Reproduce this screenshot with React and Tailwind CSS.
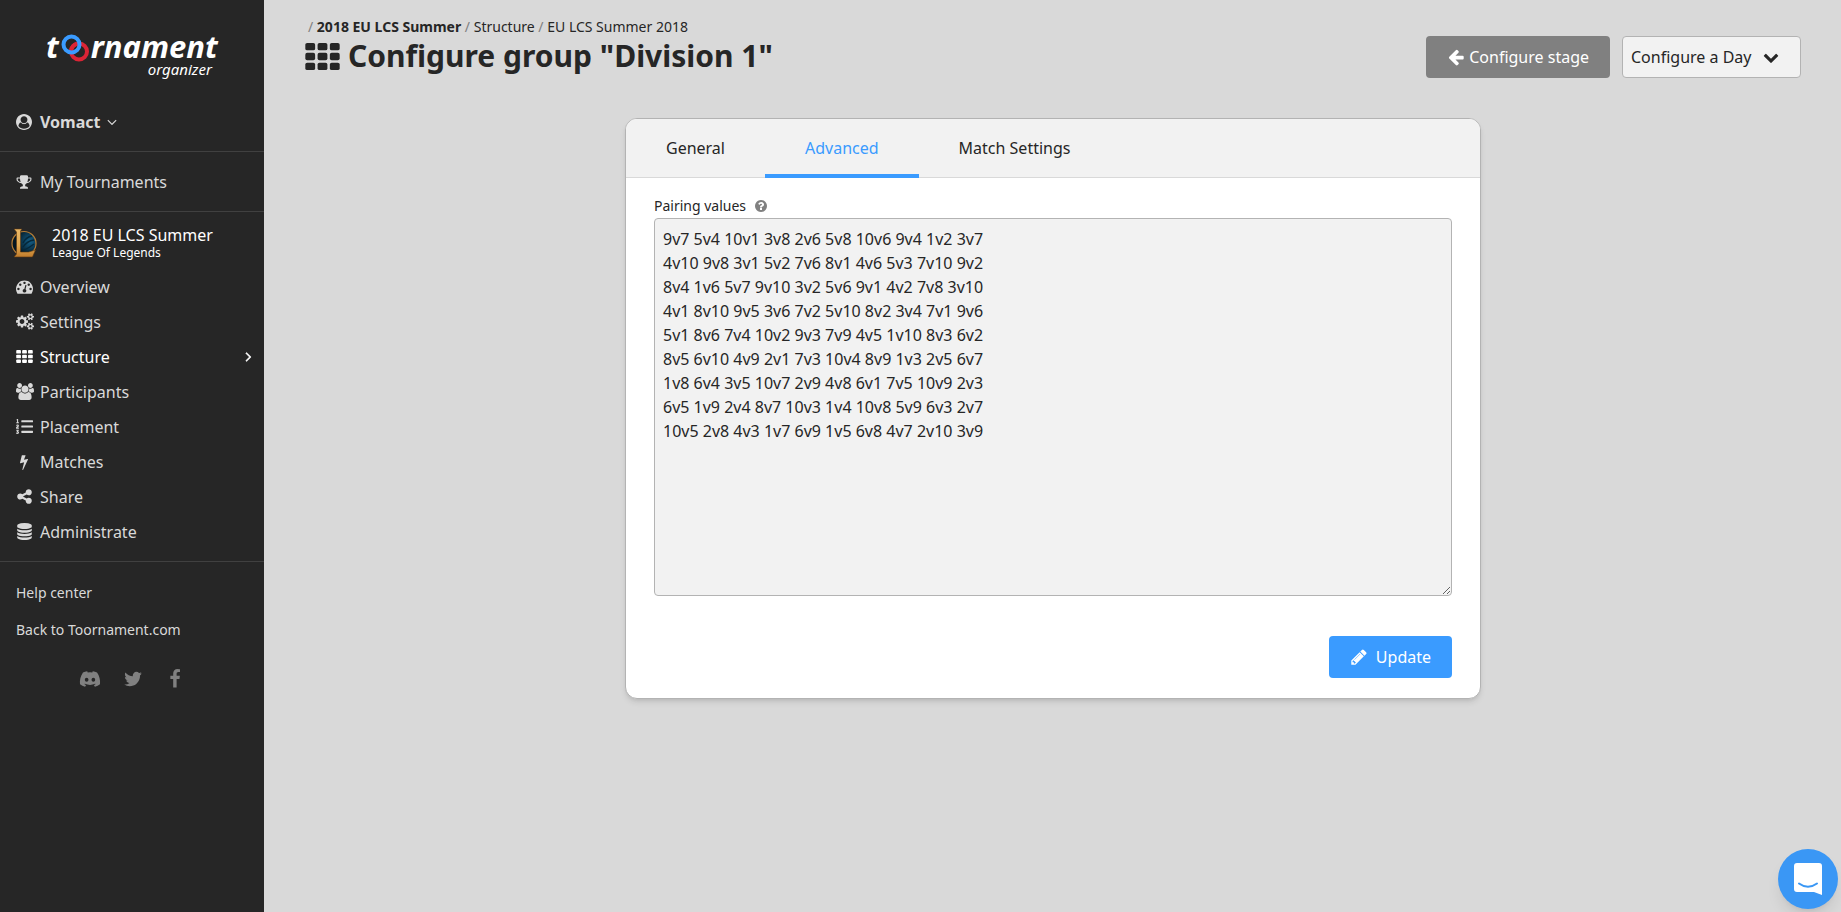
import React, { useState } from 'react';
import { FaDiscord, FaListOl } from 'react-icons/fa';

const icons = {
  user: 'M1523 1339q-22-155-87.5-257.5t-184.5-118.5q-67 74-159.5 115.5t-195.5 41.5-195.5-41.5-159.5-115.5q-119 16-184.5 118.5t-87.5 257.5q106 150 271 237.5t356 87.5 356-87.5 271-237.5zm-243-699q0-159-112.5-271.5t-271.5-112.5-271.5 112.5-112.5 271.5 112.5 271.5 271.5 112.5 271.5-112.5 112.5-271.5zm512 256q0 182-71 347.5t-190.5 286-285.5 191.5-349 71q-182 0-348-71t-286-191-191-286-71-348 71-348 191-286 286-191 348-71 348 71 286 191 191 286 71 348z',
  trophy: 'M522 883q-74-162-74-371h-256v96q0 78 94.5 162t235.5 113zm1078-275v-96h-256q0 209-74 371 141-29 235.5-113t94.5-162zm128-128v128q0 71-41.5 143t-112 130-173 97.5-215.5 44.5q-42 54-95 95-38 34-52.5 72.5t-14.5 89.5q0 54 30.5 91t97.5 37q75 0 133.5 45.5t58.5 114.5v64q0 14-9 23t-23 9h-832q-14 0-23-9t-9-23v-64q0-69 58.5-114.5t133.5-45.5q67 0 97.5-37t30.5-91q0-51-14.5-89.5t-52.5-72.5q-53-41-95-95-113-5-215.5-44.5t-173-97.5-112-130-41.5-143v-128q0-40 28-68t68-28h288v-96q0-66 47-113t113-47h576q66 0 113 47t47 113v96h288q40 0 68 28t28 68z',
  gauge: 'M384 1152q0-53-37.5-90.5t-90.5-37.5-90.5 37.5-37.5 90.5 37.5 90.5 90.5 37.5 90.5-37.5 37.5-90.5zm192-448q0-53-37.5-90.5t-90.5-37.5-90.5 37.5-37.5 90.5 37.5 90.5 90.5 37.5 90.5-37.5 37.5-90.5zm428 481l101-382q6-26-7.5-48.5t-38.5-29.5-48 6.5-30 39.5l-101 382q-60 5-107 43.5t-63 98.5q-20 77 20 146t117 89 146-20 89-117q16-60-6-117t-72-91zm660-33q0-53-37.5-90.5t-90.5-37.5-90.5 37.5-37.5 90.5 37.5 90.5 90.5 37.5 90.5-37.5 37.5-90.5zm-640-640q0-53-37.5-90.5t-90.5-37.5-90.5 37.5-37.5 90.5 37.5 90.5 90.5 37.5 90.5-37.5 37.5-90.5zm448 192q0-53-37.5-90.5t-90.5-37.5-90.5 37.5-37.5 90.5 37.5 90.5 90.5 37.5 90.5-37.5 37.5-90.5zm320 448q0 261-141 483-19 29-54 29h-1402q-35 0-54-29-141-221-141-483 0-182 71-348t191-286 286-191 348-71 348 71 286 191 191 286 71 348z',
  cogs: 'M832 896q0-106-75-181t-181-75-181 75-75 181 75 181 181 75 181-75 75-181zm768 512q0-52-38-90t-90-38-90 38-38 90q0 53 37.5 90.5t90.5 37.5 90.5-37.5 37.5-90.5zm0-1024q0-52-38-90t-90-38-90 38-38 90q0 53 37.5 90.5t90.5 37.5 90.5-37.5 37.5-90.5zm-384 421v185q0 10-7 19.5t-16 10.5l-155 24q-11 35-32 76 34 48 90 115 7 11 7 20 0 12-7 19-23 30-82.5 89.5t-78.5 59.5q-11 0-21-7l-115-90q-37 19-77 31-11 108-23 155-7 24-30 24h-186q-11 0-20-7.5t-10-17.5l-23-153q-34-10-75-31l-118 89q-7 7-20 7-11 0-21-8-144-133-144-160 0-9 7-19 10-14 41-53t47-61q-23-44-35-82l-152-24q-10-1-17-9.5t-7-19.5v-185q0-10 7-19.5t16-10.5l155-24q11-35 32-76-34-48-90-115-7-11-7-20 0-12 7-20 22-30 82-89t79-59q11 0 21 7l115 90q34-18 77-32 11-108 23-154 7-24 30-24h186q11 0 20 7.5t10 17.5l23 153q34 10 75 31l118-89q8-7 20-7 11 0 21 8 144 133 144 160 0 8-7 19-12 16-42 54t-45 60q23 48 34 82l152 23q10 2 17 10.5t7 19.5zm640 533v140q0 16-149 31-12 27-30 52 51 113 51 138 0 4-4 7-122 71-124 71-8 0-46-47t-52-68q-20 2-30 2t-30-2q-14 21-52 68t-46 47q-2 0-124-71-4-3-4-7 0-25 51-138-18-25-30-52-149-15-149-31v-140q0-16 149-31 13-29 30-52-51-113-51-138 0-4 4-7 4-2 35-20t59-34 30-16q8 0 46 46.5t52 67.5q20-2 30-2t30 2q51-71 92-112l6-2q4 0 124 70 4 3 4 7 0 25-51 138 17 23 30 52 149 15 149 31zm0-1024v140q0 16-149 31-12 27-30 52 51 113 51 138 0 4-4 7-122 71-124 71-8 0-46-47t-52-68q-20 2-30 2t-30-2q-14 21-52 68t-46 47q-2 0-124-71-4-3-4-7 0-25 51-138-18-25-30-52-149-15-149-31v-140q0-16 149-31 13-29 30-52-51-113-51-138 0-4 4-7 4-2 35-20t59-34 30-16q8 0 46 46.5t52 67.5q20-2 30-2t30 2q51-71 92-112l6-2q4 0 124 70 4 3 4 7 0 25-51 138 17 23 30 52 149 15 149 31z',
  users: 'M529 896q-162 5-265 128h-134q-82 0-138-40.5t-56-118.5q0-353 124-353 6 0 43.5 21t97.5 42.5 119 21.5q67 0 133-23-5 37-5 66 0 139 81 256zm1071 637q0 120-73 189.5t-194 69.5h-874q-121 0-194-69.5t-73-189.5q0-53 3.5-103.5t14-109 26.5-108.5 43-97.5 62-81 85.5-53.5 111.5-20q10 0 43 21.5t73 48 107 48 135 21.5 135-21.5 107-48 73-48 43-21.5q61 0 111.5 20t85.5 53.5 62 81 43 97.5 26.5 108.5 14 109 3.5 103.5zm-1024-1277q0 106-75 181t-181 75-181-75-75-181 75-181 181-75 181 75 75 181zm704 384q0 159-112.5 271.5t-271.5 112.5-271.5-112.5-112.5-271.5 112.5-271.5 271.5-112.5 271.5 112.5 112.5 271.5zm576 225q0 78-56 118.5t-138 40.5h-134q-103-123-265-128 81-117 81-256 0-29-5-66 66 23 133 23 59 0 119-21.5t97.5-42.5 43.5-21q124 0 124 353zm-128-609q0 106-75 181t-181 75-181-75-75-181 75-181 181-75 181 75 75 181z',
  bolt: 'M1333 566q18 20 7 44l-540 1157q-13 25-42 25-4 0-14-2-17-5-25.5-19t-4.5-30l197-808-406 101q-4 1-12 1-18 0-31-11-18-15-13-39l201-825q4-14 16-23t28-9h328q19 0 32 12.5t13 29.5q0 8-5 18l-171 463 396-98q8-2 12-2 19 0 34 15z',
  share: 'M1344 1024q133 0 226.5 93.5t93.5 226.5-93.5 226.5-226.5 93.5-226.5-93.5-93.5-226.5q0-12 2-34l-360-180q-92 86-218 86-133 0-226.5-93.5t-93.5-226.5 93.5-226.5 226.5-93.5q126 0 218 86l360-180q-2-22-2-34 0-133 93.5-226.5t226.5-93.5 226.5 93.5 93.5 226.5-93.5 226.5-226.5 93.5q-126 0-218-86l-360 180q2 22 2 34t-2 34l360 180q92-86 218-86z',
  database: 'M896 768q237 0 443-43t325-127v170q0 69-103 128t-280 93.5-385 34.5-385-34.5-280-93.5-103-128v-170q119 84 325 127t443 43zm0 768q237 0 443-43t325-127v170q0 69-103 128t-280 93.5-385 34.5-385-34.5-280-93.5-103-128v-170q119 84 325 127t443 43zm0-384q237 0 443-43t325-127v170q0 69-103 128t-280 93.5-385 34.5-385-34.5-280-93.5-103-128v-170q119 84 325 127t443 43zm0-1152q208 0 385 34.5t280 93.5 103 128v128q0 69-103 128t-280 93.5-385 34.5-385-34.5-280-93.5-103-128v-128q0-69 103-128t280-93.5 385-34.5z',
  twitter: 'M1684 408q-67 98-162 167 1 14 1 42 0 130-38 259.5t-115.5 248.5-184.5 210.5-258 146-323 54.5q-271 0-496-145 35 4 78 4 225 0 401-138-105-2-188-64.5t-114-159.5q33 5 61 5 43 0 85-11-112-23-185.5-111.5t-73.5-205.5v-4q68 38 146 41-66-44-105-115t-39-154q0-88 44-163 121 149 294.5 238.5t371.5 99.5q-8-38-8-74 0-134 94.5-228.5t228.5-94.5q140 0 236 102 109-21 205-78-37 115-142 178 93-10 186-50z',
  facebook: 'M1343 12v264h-157q-86 0-116 36t-30 108v189h293l-39 296h-254v759h-306v-759h-255v-296h255v-218q0-186 104-288.5t277-102.5q147 0 228 12z',
  arrow: 'M1664 896v128q0 53-32.5 90.5t-84.5 37.5h-704l293 294q38 36 38 90t-38 90l-75 76q-37 37-90 37-52 0-91-37l-651-652q-37-37-37-90 0-52 37-91l651-650q38-38 91-38 52 0 90 38l75 74q38 38 38 91t-38 91l-293 293h704q52 0 84.5 37.5t32.5 90.5z',
  pencil: 'M491 1536l91-91-235-235-91 91v107h128v128h107zm523-928q0-22-22-22-10 0-17 7l-542 542q-7 7-7 17 0 22 22 22 10 0 17-7l542-542q7-7 7-17zm-54-192l416 416-832 832h-416v-416zm683 96q0 53-37 90l-166 166-416-416 166-165q36-38 90-38 53 0 91 38l235 234q37 39 37 91z',
  question: 'M1024 1376v-192q0-14-9-23t-23-9h-192q-14 0-23 9t-9 23v192q0 14 9 23t23 9h192q14 0 23-9t9-23zm256-672q0-88-55.5-163t-138.5-116-170-41q-243 0-371 213-15 24 8 42l132 100q7 6 19 6 16 0 25-12 53-68 86-92 34-24 86-24 48 0 85.5 26t37.5 59q0 38-20 61t-68 45q-63 28-115.5 86.5t-52.5 125.5v36q0 14 9 23t23 9h192q14 0 23-9t9-23q0-19 21.5-49.5t54.5-49.5q32-18 49-28.5t46-35 44.5-48 28-60.5 12.5-81zm384 192q0 209-103 385.5t-279.5 279.5-385.5 103-385.5-103-279.5-279.5-103-385.5 103-385.5 279.5-279.5 385.5-103 385.5 103 279.5 279.5 103 385.5z',
  chevron: 'M1683 808l-742 741q-19 19-45 19t-45-19l-742-741q-19-19-19-45.5t19-45.5l166-165q19-19 45-19t45 19l531 531 531-531q19-19 45-19t45 19l166 165q19 19 19 45.5t-19 45.5z',
  angle: 'M1395 736q0 13-10 23l-466 466q-10 10-23 10t-23-10l-466-466q-10-10-10-23t10-23l50-50q10-10 23-10t23 10l393 393 393-393q10-10 23-10t23 10l50 50q10 10 10 23z',
};

function Icon({ name, className }) {
  const wide = name === 'cogs' || name === 'users';
  return (
    <svg viewBox={wide ? '-64 0 1920 1792' : '0 0 1792 1792'} fill="currentColor" className={className} aria-hidden="true">
      <path d={icons[name]} />
    </svg>
  );
}

function GridIcon({ className }) {
  return (
    <svg viewBox="0 0 1792 1408" fill="currentColor" className={className} aria-hidden="true">
      {[0, 512, 1024].map((y) =>
        [0, 640, 1280].map((x) => <rect key={`${x}-${y}`} x={x} y={y} width="512" height="384" rx="96" />)
      )}
    </svg>
  );
}

function Logo() {
  return (
    <a href="#" className="block w-[172px] ml-[46px] text-white italic" aria-label="Toornament organizer">
      <span className="flex items-center h-8 text-[31px] leading-8 font-bold">
        <span>t</span>
        <svg viewBox="0 0 28 28" className="w-7 h-7 mt-1 mx-0.5 shrink-0" fill="none" strokeWidth="4" aria-hidden="true">
          <circle cx="18" cy="17.5" r="8" stroke="#dc2435" />
          <circle cx="10.5" cy="10.5" r="8" stroke="#3a9bff" />
          <path d="M10.200 15.800A8 8 0 0 1 15.800 9.800" stroke="#dc2435" />
        </svg>
        <span>rnament</span>
      </span>
      <span className="block pr-[6px] text-right text-[15px] leading-[14px]">organizer</span>
    </a>
  );
}

// League of Legends badge next to the tournament name
function GameIcon() {
  return (
    <svg viewBox="0 0 26 30" className="w-[26px] h-[30px] shrink-0" aria-hidden="true">
      <defs>
        <linearGradient id="gold" x1="0" y1="0" x2="0" y2="1">
          <stop offset="0" stopColor="#e9b765" />
          <stop offset="0.6" stopColor="#e0a850" />
          <stop offset="1" stopColor="#c07c2c" />
        </linearGradient>
        <radialGradient id="gem" cx="0.75" cy="0.4" r="0.6">
          <stop offset="0" stopColor="#14608a" />
          <stop offset="1" stopColor="#041620" />
        </radialGradient>
      </defs>
      <circle cx="13" cy="15.500" r="12" fill="url(#gem)" stroke="#b57c35" strokeWidth="1.200" />
      <path d="M12 15q3-6 9-7M12 19q4-6 11-7M13 22q5-2 10-6" fill="none" stroke="#06283a" strokeWidth="1.300" />
      <path d="M3 1h8l-1.500 2v21h8l7-2-3 7H3l2.500-3V4z" fill="url(#gold)" stroke="#5c3510" strokeWidth="0.600" />
    </svg>
  );
}

const menu = [
  { label: 'Overview', icon: <Icon name="gauge" className="w-[17px] h-[17px]" /> },
  { label: 'Settings', icon: <Icon name="cogs" className="w-[18px] h-[17px]" /> },
  { label: 'Structure', icon: <GridIcon className="w-[17px] h-[13px]" />, active: true },
  { label: 'Participants', icon: <Icon name="users" className="w-[18px] h-[17px]" /> },
  { label: 'Placement', icon: <FaListOl className="w-[17px] h-[17px]" /> },
  { label: 'Matches', icon: <Icon name="bolt" className="w-4 h-4" /> },
  { label: 'Share', icon: <Icon name="share" className="w-[17px] h-[17px]" /> },
  { label: 'Administrate', icon: <Icon name="database" className="w-[17px] h-[17px]" /> },
];

function Sidebar() {
  return (
    <aside className="w-[264px] shrink-0 bg-[#262626] text-[#d9d9d9] pt-[30px]">
      <Logo />

      <div className="mt-7 pb-3 border-b border-[#404040]">
        <button type="button" className="flex items-center h-[35px] pl-4 font-bold">
          <Icon name="user" className="w-4 h-4 mr-2" />
          Vomact
          <Icon name="angle" className="w-4 h-4 ml-1" />
        </button>
      </div>

      <div className="py-3 border-b border-[#404040]">
        <a href="#" className="flex items-center h-[35px] pl-4">
          <Icon name="trophy" className="w-4 h-4 mr-2" />
          My Tournaments
        </a>
      </div>

      <div className="pb-3 border-b border-[#404040]">
        <a href="#" className="flex items-center h-[57px] pl-[11px] pt-1 text-white">
          <GameIcon />
          <span className="ml-[15px]">
            <span className="block leading-5">2018 EU LCS Summer</span>
            <span className="block text-xs">League Of Legends</span>
          </span>
        </a>
        <nav>
          {menu.map((item) => (
            <a
              key={item.label}
              href="#"
              className={item.active ? 'flex items-center h-[35px] pl-4 pr-2 text-white' : 'flex items-center h-[35px] pl-4 pr-2'}
            >
              <span className="w-6 shrink-0">{item.icon}</span>
              {item.label}
              {item.active && <Icon name="angle" className="w-4 h-4 ml-auto -rotate-90 stroke-current stroke-[60px]" />}
            </a>
          ))}
        </nav>
      </div>

      <div className="flex flex-col pt-3 pl-4 text-sm">
        <a href="#" className="leading-[37px]">Help center</a>
        <a href="#" className="leading-[37px]">Back to Toornament.com</a>
      </div>
      <div className="flex items-center justify-center mt-5 gap-[22px] text-[#808080]">
        <a href="#" aria-label="Discord"><FaDiscord className="w-[22px] h-[22px]" /></a>
        <a href="#" aria-label="Twitter"><Icon name="twitter" className="w-5 h-5" /></a>
        <a href="#" aria-label="Facebook"><Icon name="facebook" className="w-5 h-5" /></a>
      </div>
    </aside>
  );
}

function PageHeader() {
  return (
    <header className="flex items-start justify-between">
      <div>
        <nav className="pl-[3px] pt-4 text-sm leading-[21px]">
          <span className="text-[#808080]">/ </span>
          <a href="#" className="font-bold">2018 EU LCS Summer</a>
          <span className="text-[#808080]"> / </span>
          <a href="#">Structure</a>
          <span className="text-[#808080]"> / </span>
          <a href="#">EU LCS Summer 2018</a>
        </nav>
        <h1 className="flex items-center gap-2 text-[30px] leading-[38px] font-bold">
          <GridIcon className="w-[35px] h-[27px]" />
          Configure group "Division 1"
        </h1>
      </div>
      <div className="flex gap-3 pt-9">
        <button type="button" className="flex items-center h-[42px] px-[21px] rounded-sm bg-[#808080] text-white">
          <Icon name="arrow" className="w-[18px] h-[18px] mr-1" />
          Configure stage
        </button>
        <div className="relative">
          <select
            aria-label="Configure a Day"
            className="appearance-none w-[179px] h-[42px] pl-2 rounded-sm border border-[#b3b3b3] bg-[#f2f2f2]"
          >
            <option>Configure a Day</option>
          </select>
          <Icon name="chevron" className="absolute right-[22px] top-[13px] w-4 h-4 pointer-events-none" />
        </div>
      </div>
    </header>
  );
}

const pairings = `9v7 5v4 10v1 3v8 2v6 5v8 10v6 9v4 1v2 3v7
4v10 9v8 3v1 5v2 7v6 8v1 4v6 5v3 7v10 9v2
8v4 1v6 5v7 9v10 3v2 5v6 9v1 4v2 7v8 3v10
4v1 8v10 9v5 3v6 7v2 5v10 8v2 3v4 7v1 9v6
5v1 8v6 7v4 10v2 9v3 7v9 4v5 1v10 8v3 6v2
8v5 6v10 4v9 2v1 7v3 10v4 8v9 1v3 2v5 6v7
1v8 6v4 3v5 10v7 2v9 4v8 6v1 7v5 10v9 2v3
6v5 1v9 2v4 8v7 10v3 1v4 10v8 5v9 6v3 2v7
10v5 2v8 4v3 1v7 6v9 1v5 6v8 4v7 2v10 3v9`;

function GroupForm() {
  const [tab, setTab] = useState('Advanced');
  const [values, setValues] = useState(pairings);

  return (
    <form
      onSubmit={(e) => e.preventDefault()}
      className="w-full max-w-[856px] mx-auto mt-10 rounded-xl border border-[#b3b3b3] bg-white shadow-md overflow-hidden"
    >
      <div className="flex bg-[#f2f2f2] border-b border-[#d9d9d9]">
        {['General', 'Advanced', 'Match Settings'].map((name) => (
          <button
            key={name}
            type="button"
            onClick={() => setTab(name)}
            className={
              tab === name
                ? 'h-[59px] px-10 -mb-px pt-0.5 border-b-4 border-[#3a9bff] text-[#3a9bff]'
                : 'h-[59px] px-10 -mb-px pt-0.5 border-b-4 border-transparent'
            }
          >
            {name}
          </button>
        ))}
      </div>
      <div className="px-7 pt-[17px] pb-5">
        <label htmlFor="pairing-values" className="flex items-center mb-0.5 text-sm leading-[21px]">
          Pairing values
          <Icon name="question" className="w-[14px] h-[14px] ml-2 text-[#808080]" />
        </label>
        <textarea
          id="pairing-values"
          value={values}
          onChange={(e) => setValues(e.target.value)}
          className="block w-full h-[378px] px-2 py-2 leading-6 rounded-sm border border-[#b3b3b3] bg-[#f2f2f2] resize"
        />
        <div className="flex justify-end mt-10">
          <button type="submit" className="flex items-center h-[42px] px-[21px] rounded-sm bg-[#3a9bff] text-white">
            <Icon name="pencil" className="w-[18px] h-[18px] mr-2" />
            Update
          </button>
        </div>
      </div>
    </form>
  );
}

function App() {
  return (
    <div className="flex min-h-screen bg-[#d9d9d9] text-[#262626] font-['Noto_Sans',sans-serif]">
      <Sidebar />
      <main className="flex-1 pl-[41px] pr-10">
        <PageHeader />
        <GroupForm />
      </main>
      <button
        type="button"
        aria-label="Open chat"
        className="fixed right-[3px] bottom-[3px] w-[60px] h-[60px] flex items-center justify-center rounded-full bg-[#3a97f5] shadow-lg"
      >
        <svg viewBox="0 0 28 32" className="w-7 h-8" aria-hidden="true">
          <path d="M3 0h22a3 3 0 0 1 3 3v29l-8-3H3a3 3 0 0 1-3-3V3a3 3 0 0 1 3-3z" fill="#fff" />
          <path d="M5 20.500q9 6.500 18 0" fill="none" stroke="#3a97f5" strokeWidth="2" strokeLinecap="round" />
        </svg>
      </button>
    </div>
  );
}

export default App;
